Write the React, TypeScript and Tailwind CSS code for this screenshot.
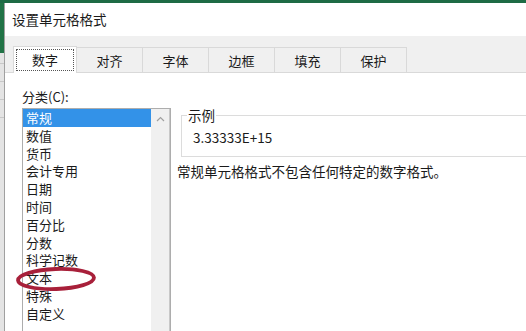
import React from "react";

const font = { fontFamily: '"Noto Sans CJK SC", "Noto Sans", sans-serif' };

const items = ["常规", "数值", "货币", "会计专用", "日期", "时间", "百分比", "分数", "科学记数", "文本", "特殊", "自定义"];
const tabs = ["对齐", "字体", "边框", "填充", "保护"];

export default function App() {
  return (
    <div className="relative w-[526px] h-[331px] overflow-hidden bg-white flex flex-col text-[#1a1a1a]" style={font}>
      <div className="h-[3px] bg-[#1e6b45] shrink-0" />
      <div className="flex flex-1 min-h-0">
        <div className="w-[4px] flex flex-col shrink-0">
          <div className="h-[50px] bg-[#217346]" />
          <div className="flex-1 bg-[#e4e4e4] flex flex-col gap-[17px] pt-[10px]">
            <div className="h-[1px] bg-[#c8c8c8]" />
            <div className="h-[1px] bg-[#c8c8c8]" />
            <div className="h-[1px] bg-[#c8c8c8]" />
            <div className="h-[1px] bg-[#c8c8c8]" />
          </div>
        </div>
        <div className="flex-1 flex flex-col border-l border-[#a0a0a0] min-w-0">
          <div className="h-[33px] shrink-0 flex items-center pl-[7px] text-[13.5px] bg-white">设置单元格格式</div>
          <div className="bg-[#f0f0f0] pt-[11px] shrink-0">
            <div className="flex h-[26px] pl-[8px] border-b border-[#d9d9d9]">
              <div className="w-[64px] h-[27px] -mt-[1px] bg-white border border-[#d9d9d9] border-b-0 p-[2px] relative z-10">
                <div className="w-full h-full border border-dotted border-[#555] flex items-center justify-center text-[13px]">数字</div>
              </div>
              {tabs.map((t) => (
                <div key={t} className="w-[66px] h-[26px] border-r border-t border-[#d9d9d9] flex items-center justify-center text-[13px]">{t}</div>
              ))}
            </div>
          </div>
          <div className="flex-1 flex pt-[14px] pl-[17px] gap-[10px]">
            <div className="flex flex-col w-[149px] shrink-0 -mb-[12px]">
              <div className="text-[13px] h-[20px] leading-[20px]">分类(C):</div>
              <div className="flex-1 mt-[1px] border border-[#adadad] flex bg-white">
                <div className="flex-1 flex flex-col text-[13px]">
                  {items.map((it, i) => (
                    <div
                      key={it}
                      className={
                        i === 0
                          ? "h-[17.8px] leading-[17.8px] pl-[3px] bg-[#3392e8] text-white"
                          : "h-[17.8px] leading-[17.8px] pl-[3px]"
                      }
                    >
                      {it}
                    </div>
                  ))}
                </div>
                <div className="w-[19px] bg-[#f0f0f0] border-r border-[#c8c8c8] flex justify-center pt-[7px]">
                  <svg width="9" height="6" viewBox="0 0 9 6">
                    <path d="M1 5 L4.5 1.5 L8 5" fill="none" stroke="#a0a0a0" strokeWidth="1.2" />
                  </svg>
                </div>
              </div>
            </div>
            <div className="flex-1 flex flex-col pt-[28px] -mr-[20px]">
              <div className="relative border border-[#dcdcdc] h-[42px] flex items-center pl-[11px] text-[13.5px]">
                <span className="absolute -top-[11px] left-[5px] bg-white px-[1px] text-[13.5px] leading-[20px]">示例</span>
                <span className="mt-[2px]">3.33333E+15</span>
              </div>
              <div className="mt-[4px] text-[13.5px] -ml-[4px]">常规单元格格式不包含任何特定的数字格式。</div>
            </div>
          </div>
        </div>
      </div>
      <svg className="absolute left-[14px] top-[265px]" width="84" height="28" viewBox="0 0 84 28">
        <ellipse cx="42" cy="14" rx="38" ry="10" fill="none" stroke="#a8203a" strokeWidth="3.8" transform="rotate(-2 42 14)" />
      </svg>
    </div>
  );
}
